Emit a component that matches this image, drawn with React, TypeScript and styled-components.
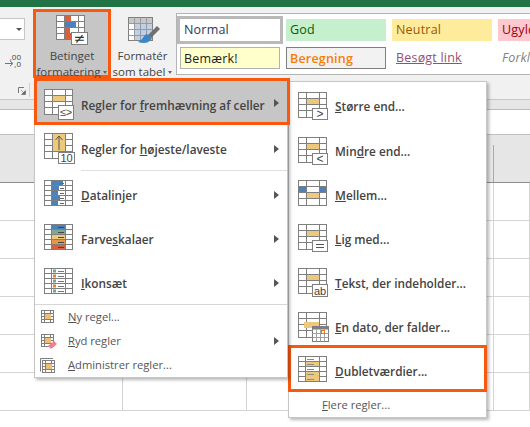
import React from "react";
import styled, { createGlobalStyle } from "styled-components";

const GlobalStyle = createGlobalStyle`
  html, body { margin: 0; padding: 0; background: #fff; }
  #root { width: 530px; height: 427px; }
`;

const FONT = `"Open Sans", "Noto Sans", Arial, sans-serif`;
const ORANGE = "#f9580f";
const STROKE = "#7f7f7f";
const YELLOW = "#edc97e";
const BLUE = "#4c81b9";
const RED = "#d9603f";

const Page = styled.div`
  position: relative;
  width: 530px;
  height: 427px;
  overflow: hidden;
  font-family: ${FONT};
  background: #fff;
  display: flex;
  flex-direction: column;
`;
const TitleStrip = styled.div`
  height: 7px;
  background: #217346;
  flex: none;
`;
const Ribbon = styled.div`
  height: 92px;
  flex: none;
  box-sizing: border-box;
  background: #f1f1f1;
  display: flex;
  align-items: flex-start;
  padding-top: 2px;
`;
const NumberGroup = styled.div`
  width: 33px;
  height: 86px;
  flex: none;
  position: relative;
  display: flex;
  flex-direction: column;
  box-sizing: border-box;
`;
const Combo = styled.div`
  margin-top: 9px;
  width: 25px;
  height: 22px;
  box-sizing: border-box;
  background: #fff;
  border: 1px solid #c6c6c6;
  border-left: 0;
  display: flex;
  align-items: center;
  justify-content: flex-end;
  padding-right: 2px;
`;
const ComboCaret = styled.span`
  width: 0;
  height: 0;
  border-left: 3px solid transparent;
  border-right: 3px solid transparent;
  border-top: 3px solid #555;
`;
const DecimalBlock = styled.div`
  margin: 13px 0 0 4px;
  width: 17px;
  height: 14px;
  display: flex;
  flex-direction: column;
  align-items: flex-end;
  font-size: 8px;
  line-height: 7px;
  color: #444;
`;
const DecimalLine = styled.div`
  display: flex;
  align-items: center;
`;
const Launcher = styled.svg`
  margin: 20px 0 0 18px;
  flex: none;
`;
const GroupDivider = styled.div`
  position: absolute;
  left: 29px;
  top: 74px;
  width: 1px;
  height: 14px;
  background: #d0d0d0;
`;
const BigButton = styled.div<{ $active?: boolean; $w: number }>`
  width: ${(p) => p.$w}px;
  height: 69px;
  flex: none;
  box-sizing: border-box;
  border: 3px solid ${(p) => (p.$active ? ORANGE : "transparent")};
  background: ${(p) => (p.$active ? "#c6c6c6" : "transparent")};
  display: flex;
  flex-direction: column;
  align-items: center;
  color: #444;
  font-size: 11.5px;
  line-height: 16px;
`;
const BigIcon = styled.div`
  flex: none;
  height: 33px;
  margin-top: 3px;
  line-height: 0;
`;
const BigLabel = styled.div`
  white-space: nowrap;
  display: flex;
  align-items: center;
  gap: 3px;
`;
const DropCaret = styled.span`
  width: 0;
  height: 0;
  border-left: 2.5px solid transparent;
  border-right: 2.5px solid transparent;
  border-top: 3px solid #666;
  margin-top: 1px;
`;
const Gallery = styled.div`
  margin: 4px 0 0 2px;
  width: 360px;
  flex: none;
  height: 62px;
  box-sizing: border-box;
  background: #fff;
  border: 1px solid #b4b4b4;
  border-right: 0;
  padding: 5px 0 0 3px;
  display: grid;
  grid-template-columns: repeat(4, 100px);
  grid-auto-rows: 22px;
  column-gap: 6px;
  row-gap: 6px;
`;
const StyleCell = styled.div<{ $bg?: string; $fg: string; $line?: string; $bold?: boolean; $italic?: boolean; $selected?: boolean; $link?: boolean }>`
  box-sizing: border-box;
  height: 22px;
  background: ${(p) => p.$bg ?? "transparent"};
  color: ${(p) => p.$fg};
  border: ${(p) => (p.$line ? `1px solid ${p.$line}` : "0")};
  font-weight: ${(p) => (p.$bold ? 600 : 400)};
  font-style: ${(p) => (p.$italic ? "italic" : "normal")};
  outline: ${(p) => (p.$selected ? "3px solid #b9b9b9" : "none")};
  font-size: 12.5px;
  line-height: 21px;
  padding-left: ${(p) => (p.$line ? 3 : 4)}px;
  white-space: nowrap;
  overflow: hidden;
  letter-spacing: 0.2px;
  text-decoration: ${(p) => (p.$link ? "underline" : "none")};
`;

const Band = styled.div`
  height: 11px;
  flex: none;
  background: #e6e6e6;
  border-top: 1px solid #c8c8c8;
  border-bottom: 1px solid #bcbcbc;
  box-sizing: border-box;
`;
const WhiteBand = styled.div`
  height: 25px;
  flex: none;
  background: #fff;
  border-bottom: 1px solid #c0c0c0;
  box-sizing: border-box;
`;
const HeaderBand = styled.div`
  height: 48px;
  flex: none;
  box-sizing: border-box;
  background: #e6e6e6;
  border-bottom: 1px solid #8e8e8e;
  padding-left: 493px;
  padding-top: 10px;
`;
const HeaderTick = styled.div`
  width: 1px;
  height: 37px;
  background: #a8a8a8;
`;
const Sheet = styled.div`
  flex: 1;
  display: grid;
  grid-template-columns: 123px 124px 123px 124px 36px;
  grid-auto-rows: 38px;
  overflow: hidden;
`;
const Cell = styled.div`
  box-sizing: border-box;
  border-right: 1px solid #d4d4d4;
  border-bottom: 1px solid #d4d4d4;
`;

const Menu = styled.div<{ $left: number; $top: number; $w: number; $z: number }>`
  position: absolute;
  left: ${(p) => p.$left}px;
  top: ${(p) => p.$top}px;
  width: ${(p) => p.$w}px;
  z-index: ${(p) => p.$z};
  box-sizing: border-box;
  background: #fff;
  border: 1px solid #c6c6c6;
  box-shadow: 2px 2px 3px rgba(0, 0, 0, 0.28);
  display: flex;
  flex-direction: column;
`;
const Row = styled.div<{ $h?: number; $active?: boolean; $pad?: number; $mark?: "main" | "sub" }>`
  position: relative;
  height: ${(p) => p.$h ?? 44}px;
  flex: none;
  display: flex;
  align-items: flex-start;
  padding-left: ${(p) => p.$pad ?? 9}px;
  padding-right: 8px;
  background: ${(p) => (p.$active ? "#c6c6c6" : "transparent")};
  color: #444;
  ${(p) =>
    p.$mark === "main"
      ? `&::after { content: ""; position: absolute; left: -1px; right: -3px; top: -3px; bottom: 0; border: 3px solid ${ORANGE}; pointer-events: none; }`
      : ""}
  ${(p) =>
    p.$mark === "sub"
      ? `&::after { content: ""; position: absolute; left: -1px; right: -1px; top: -2px; bottom: -1px; border: 3px solid ${ORANGE}; pointer-events: none; }`
      : ""}
`;
const IconSlot = styled.div<{ $top: number; $w?: number }>`
  width: ${(p) => p.$w ?? 37}px;
  flex: none;
  margin-top: ${(p) => p.$top}px;
  line-height: 0;
`;
const Label = styled.span<{ $plain?: boolean; $center?: number }>`
  margin-top: ${(p) => p.$center ?? 16}px;
  font-size: ${(p) => (p.$plain ? 11.2 : 11.8)}px;
  line-height: 16px;
  font-weight: ${(p) => (p.$plain ? 400 : 600)};
  color: ${(p) => (p.$plain ? "#555" : "#444")};
  white-space: nowrap;
`;
const RowArrow = styled.span<{ $top: number }>`
  margin-left: auto;
  margin-top: ${(p) => p.$top}px;
  width: 0;
  height: 0;
  border-top: 4px solid transparent;
  border-bottom: 4px solid transparent;
  border-left: 5px solid #555;
`;
const RuleLine = styled.div`
  height: 1px;
  margin: 1px 0 0;
  background: #d6d6d6;
`;
const InsetLine = styled.div`
  position: absolute;
  left: 46px;
  right: 0;
  bottom: 0;
  height: 1px;
  background: #e0e0e0;
`;

type Bar = [number, number, number, number, string];

function Table({ x = 0.5, y = 0.5, w = 28, h = 25, cols, rows }: { x?: number; y?: number; w?: number; h?: number; cols: number[]; rows: number[] }) {
  return (
    <g fill="none" stroke={STROKE} strokeWidth="1">
      <rect x={x} y={y} width={w} height={h} fill="#fff" />
      {cols.map((c) => (
        <line key={`c${c}`} x1={x + c} x2={x + c} y1={y} y2={y + h} />
      ))}
      {rows.map((r) => (
        <line key={`r${r}`} x1={x} x2={x + w} y1={y + r} y2={y + r} />
      ))}
    </g>
  );
}

function Fills({ bars }: { bars: Bar[] }) {
  return (
    <>
      {bars.map(([x, y, w, h, c], i) => (
        <rect key={i} x={x} y={y} width={w} height={h} fill={c} />
      ))}
    </>
  );
}

function Badge({ x = 14.5, y = 16.5, w = 15, h = 11 }: { x?: number; y?: number; w?: number; h?: number }) {
  return <rect x={x} y={y} width={w} height={h} fill="#fff" stroke={STROKE} />;
}

function BadgeText({ x, y, size, children }: { x: number; y: number; size: number; children: string }) {
  return (
    <text x={x} y={y} fontSize={size} textAnchor="middle" fill="#444" fontFamily="Liberation Sans, sans-serif">
      {children}
    </text>
  );
}

const TC = [8, 21];
const TR = [6, 12, 18];

function RuleIcon({ badge }: { badge: "le" | "gt" | "lt" | "eq" | "ab" | "ten" }) {
  return (
    <svg width="34" height="32" style={{ overflow: "visible" }}>
      <Table cols={TC} rows={TR} />
      <Fills bars={badge === "ten" ? [[9, 1, 12, 17, YELLOW]] : [[9, 7, 12, 5, YELLOW]]} />
      {badge === "ten" && <path d="M15 17V3M11.5 7L15 3l3.5 4" fill="none" stroke="#555" strokeWidth="1" />}
      {badge === "le" && (
        <>
          <Badge x={14.5} y={16.500} h={14} />
          <BadgeText x={22} y={27} size={11}>≤&gt;</BadgeText>
        </>
      )}
      {badge === "gt" && (
        <>
          <Badge />
          <BadgeText x={22} y={26} size={12}>&gt;</BadgeText>
        </>
      )}
      {badge === "lt" && (
        <>
          <Badge />
          <BadgeText x={22} y={26} size={12}>&lt;</BadgeText>
        </>
      )}
      {badge === "eq" && (
        <>
          <Badge />
          <path d="M18 20.500h8M18 23.500h8" stroke="#555" />
        </>
      )}
      {badge === "ab" && (
        <>
          <Badge h={12} />
          <BadgeText x={22} y={26.500} size={11}>ab</BadgeText>
        </>
      )}
      {badge === "ten" && (
        <>
          <Badge x={14.5} y={19.5} w={16} h={11} />
          <BadgeText x={22.5} y={29} size={11}>10</BadgeText>
        </>
      )}
    </svg>
  );
}

function MellemIcon() {
  return (
    <svg width="34" height="32">
      <Table cols={TC} rows={TR} />
      <Fills bars={[[1, 7, 7, 5, BLUE], [22, 7, 6, 5, BLUE], [9, 13, 12, 5, YELLOW]]} />
    </svg>
  );
}

function DataBarsIcon() {
  const rows = [1, 6, 11, 16, 21];
  const widths = [11, 7, 6, 8, 6];
  return (
    <svg width="34" height="32">
      <Table cols={[7, 21]} rows={[5, 10, 15, 20]} />
      <Fills bars={rows.map((y, i) => [8, y, widths[i], 4, BLUE] as Bar)} />
      <path d="M16 3.5h4M16 8.5h4M16 13.5h4M16 18.5h4M16 23.5h4" stroke="#666" />
    </svg>
  );
}

function ScaleIcon() {
  const colours = [BLUE, "#7aa996", YELLOW, "#e8963f", RED];
  return (
    <svg width="34" height="32">
      <Table cols={[7, 21]} rows={[5, 10, 15, 20]} />
      <Fills bars={colours.map((c, i) => [8, 1 + i * 5, 13, 4, c] as Bar)} />
      <path d="M14 3.5h6M14 8.5h6M14 13.5h6M14 18.5h6M14 23.5h6" stroke="#444" />
    </svg>
  );
}

function IconSetIcon() {
  const dots = ["#6ea695", "#e8803a", "#6ea695", "#e8803a", "#6ea695"];
  return (
    <svg width="34" height="32">
      <Table cols={[7, 21]} rows={[5, 10, 15, 20]} />
      {dots.map((c, i) => (
        <rect key={i} x={9} y={1.5 + i * 5} width={3} height={3} fill={c} />
      ))}
      <path d="M14 3.5h6M14 8.5h6M14 13.5h6M14 18.5h6M14 23.5h6" stroke="#777" />
    </svg>
  );
}

function DateIcon() {
  return (
    <svg width="36" height="34" style={{ overflow: "visible" }}>
      <Table cols={TC} rows={TR} />
      <Fills bars={[[6, 10, 15, 6, YELLOW]]} />
      <rect x="14.5" y="14.5" width="16" height="15" fill="#fff" stroke={STROKE} />
      <rect x="14.5" y="14.5" width="16" height="3" fill={STROKE} />
      <path d="M14.5 21.500h16M14.5 25.500h16M18.500 17.500v12M22.500 17.500v12M26.500 17.500v12" stroke="#a0a0a0" />
      <rect x="23.5" y="18.5" width="3" height="3" fill="#fff" stroke="#e8742a" />
    </svg>
  );
}

function DupIcon() {
  return (
    <svg width="34" height="32">
      <Table cols={[7, 21]} rows={[5, 10, 15, 20]} />
      <Fills bars={[[8, 6, 13, 4, YELLOW], [8, 16, 13, 9, YELLOW]]} />
      <path d="M9 3.5h7M9 8.5h7M9 13.5h7M9 18.5h7M9 23.5h7" stroke="#8a8a8a" />
    </svg>
  );
}

function SmallIcon({ kind }: { kind: "new" | "clear" | "manage" }) {
  const manage = kind === "manage";
  return (
    <svg width="18" height="17">
      {manage && <path d="M0.5 14.5V1.5H13" fill="none" stroke={STROKE} />}
      <Table x={manage ? 2.5 : 1.5} y={manage ? 3.5 : 1.5} w={12} h={12} cols={[3, 9]} rows={[3, 6, 9]} />
      <Fills bars={[[manage ? 6 : 5, manage ? 7 : 5, 6, 5, "#eebe74"]]} />
      {kind === "clear" && <path d="M8 13l6-5 3 3-6 5z" fill="#ee7f95" />}
    </svg>
  );
}

function CondIcon() {
  return (
    <svg width="34" height="33" style={{ overflow: "visible" }}>
      <Table x={1.5} y={0.5} w={28} h={24} cols={[8, 22]} rows={[6, 12, 18]} />
      <Fills bars={[[10, 1, 6, 6, RED], [10, 7, 11, 5, BLUE], [10, 13, 5, 5, RED], [10, 19, 6, 5, RED]]} />
      <rect x="16.5" y="17.5" width="16" height="12" fill="#fff" stroke={STROKE} />
      <text x="24.5" y="28" fontSize="14" textAnchor="middle" fill="#333" fontFamily="DejaVu Sans, sans-serif">≠</text>
    </svg>
  );
}

function FormatTableIcon() {
  return (
    <svg width="34" height="33" style={{ overflow: "visible" }}>
      <rect x="2.5" y="2.5" width="24" height="23" fill="#fff" stroke={STROKE} />
      <rect x="3" y="3" width="23" height="5" fill="#c7c7c7" />
      <rect x="8" y="8" width="18" height="17" fill="#bcd1e8" />
      <path d="M2.5 8.5h24M2.5 14.5h24M2.5 20.5h24M8.5 2.5v23M14.5 2.5v23M20.5 2.5v23" stroke="#9a9a9a" fill="none" />
      <path d="M31 11l-9 9 3 3 9-9z" fill="#707070" />
      <path d="M21 19c-4 1-3 5-9 8 6 2 12 1 14-4z" fill="#3d87c8" />
    </svg>
  );
}

const sheetCells = Array.from({ length: 30 });

export default function App() {
  return (
    <Page>
      <GlobalStyle />
      <TitleStrip />
      <Ribbon>
        <NumberGroup>
          <Combo>
            <ComboCaret />
          </Combo>
          <DecimalBlock>
            <DecimalLine>,00</DecimalLine>
            <DecimalLine>
              <svg width="9" height="7">
                <path d="M0 3.5h7M5 1l3 2.500-3 2.500" fill="none" stroke="#3d7fc0" strokeWidth="1" />
              </svg>
              ,0
            </DecimalLine>
          </DecimalBlock>
          <Launcher width="8" height="8">
            <path d="M0.5 6V0.5H6" fill="none" stroke="#777" />
            <path d="M3 3l3 3M7.500 3.500v4h-4z" fill="#666" stroke="#666" strokeWidth="0.6" />
          </Launcher>
          <GroupDivider />
        </NumberGroup>
        <BigButton $active $w={78}>
          <BigIcon><CondIcon /></BigIcon>
          <BigLabel>Betinget</BigLabel>
          <BigLabel>
            formatering<DropCaret />
          </BigLabel>
        </BigButton>
        <BigButton $w={63}>
          <BigIcon><FormatTableIcon /></BigIcon>
          <BigLabel>Formatér</BigLabel>
          <BigLabel>
            som tabel<DropCaret />
          </BigLabel>
        </BigButton>
        <Gallery>
          <StyleCell $fg="#1f3864" $selected>Normal</StyleCell>
          <StyleCell $bg="#c6efce" $fg="#006100">God</StyleCell>
          <StyleCell $bg="#ffeb9c" $fg="#9c5700">Neutral</StyleCell>
          <StyleCell $bg="#ffc7ce" $fg="#9c0006">Ugyldig</StyleCell>
          <StyleCell $bg="#ffffcc" $fg="#222" $line="#b2b2b2">Bemærk!</StyleCell>
          <StyleCell $bg="#f2f2f2" $fg="#fa7d00" $line="#7f7f7f" $bold>Beregning</StyleCell>
          <StyleCell $fg="#954f72" $link>Besøgt link</StyleCell>
          <StyleCell $fg="#7f7f7f" $italic>Forklarende</StyleCell>
        </Gallery>
      </Ribbon>
      <Band />
      <WhiteBand />
      <HeaderBand>
        <HeaderTick />
      </HeaderBand>
      <Sheet>
        {sheetCells.map((_, i) => (
          <Cell key={i} />
        ))}
      </Sheet>

      <Menu $left={34} $top={80} $w={254} $z={3}>
        <Row $active $mark="main">
          <IconSlot $top={8}><RuleIcon badge="le" /></IconSlot>
          <Label>Regler for <u>f</u>remhævning af celler</Label>
          <RowArrow $top={18} />
        </Row>
        <Row $h={46}>
          <IconSlot $top={8}><RuleIcon badge="ten" /></IconSlot>
          <Label>Regler for <u>h</u>øjeste/laveste</Label>
          <RowArrow $top={20} />
          <InsetLine />
        </Row>
        <Row>
          <IconSlot $top={9}><DataBarsIcon /></IconSlot>
          <Label><u>D</u>atalinjer</Label>
          <RowArrow $top={20} />
        </Row>
        <Row>
          <IconSlot $top={9}><ScaleIcon /></IconSlot>
          <Label>Farve<u>s</u>kalaer</Label>
          <RowArrow $top={20} />
        </Row>
        <Row>
          <IconSlot $top={9}><IconSetIcon /></IconSlot>
          <Label><u>I</u>konsæt</Label>
          <RowArrow $top={20} />
        </Row>
        <RuleLine />
        <Row $h={24} $pad={5}>
          <IconSlot $top={4} $w={28}><SmallIcon kind="new" /></IconSlot>
          <Label $plain $center={4}><u>N</u>y regel...</Label>
        </Row>
        <Row $h={24} $pad={5}>
          <IconSlot $top={4} $w={28}><SmallIcon kind="clear" /></IconSlot>
          <Label $plain $center={4}><u>R</u>yd regler</Label>
          <RowArrow $top={8} />
        </Row>
        <Row $h={24} $pad={5}>
          <IconSlot $top={4} $w={28}><SmallIcon kind="manage" /></IconSlot>
          <Label $plain $center={4}><u>A</u>dministrer regler...</Label>
        </Row>
      </Menu>

      <Menu $left={288} $top={81} $w={199} $z={2}>
        <Row $h={45}>
          <IconSlot $top={10}><RuleIcon badge="gt" /></IconSlot>
          <Label><u>S</u>tørre end...</Label>
        </Row>
        <Row>
          <IconSlot $top={10}><RuleIcon badge="lt" /></IconSlot>
          <Label>Min<u>d</u>re end...</Label>
        </Row>
        <Row>
          <IconSlot $top={9}><MellemIcon /></IconSlot>
          <Label><u>M</u>ellem...</Label>
        </Row>
        <Row>
          <IconSlot $top={9}><RuleIcon badge="eq" /></IconSlot>
          <Label><u>L</u>ig med...</Label>
        </Row>
        <Row>
          <IconSlot $top={9}><RuleIcon badge="ab" /></IconSlot>
          <Label><u>T</u>ekst, der indeholder...</Label>
        </Row>
        <Row>
          <IconSlot $top={9}><DateIcon /></IconSlot>
          <Label><u>E</u>n dato, der falder...</Label>
        </Row>
        <Row $mark="sub">
          <IconSlot $top={9}><DupIcon /></IconSlot>
          <Label><u>D</u>ubletværdier...</Label>
        </Row>
        <Row $h={26} $pad={33}>
          <Label $plain $center={6}><u>F</u>lere regler...</Label>
        </Row>
      </Menu>
    </Page>
  );
}
